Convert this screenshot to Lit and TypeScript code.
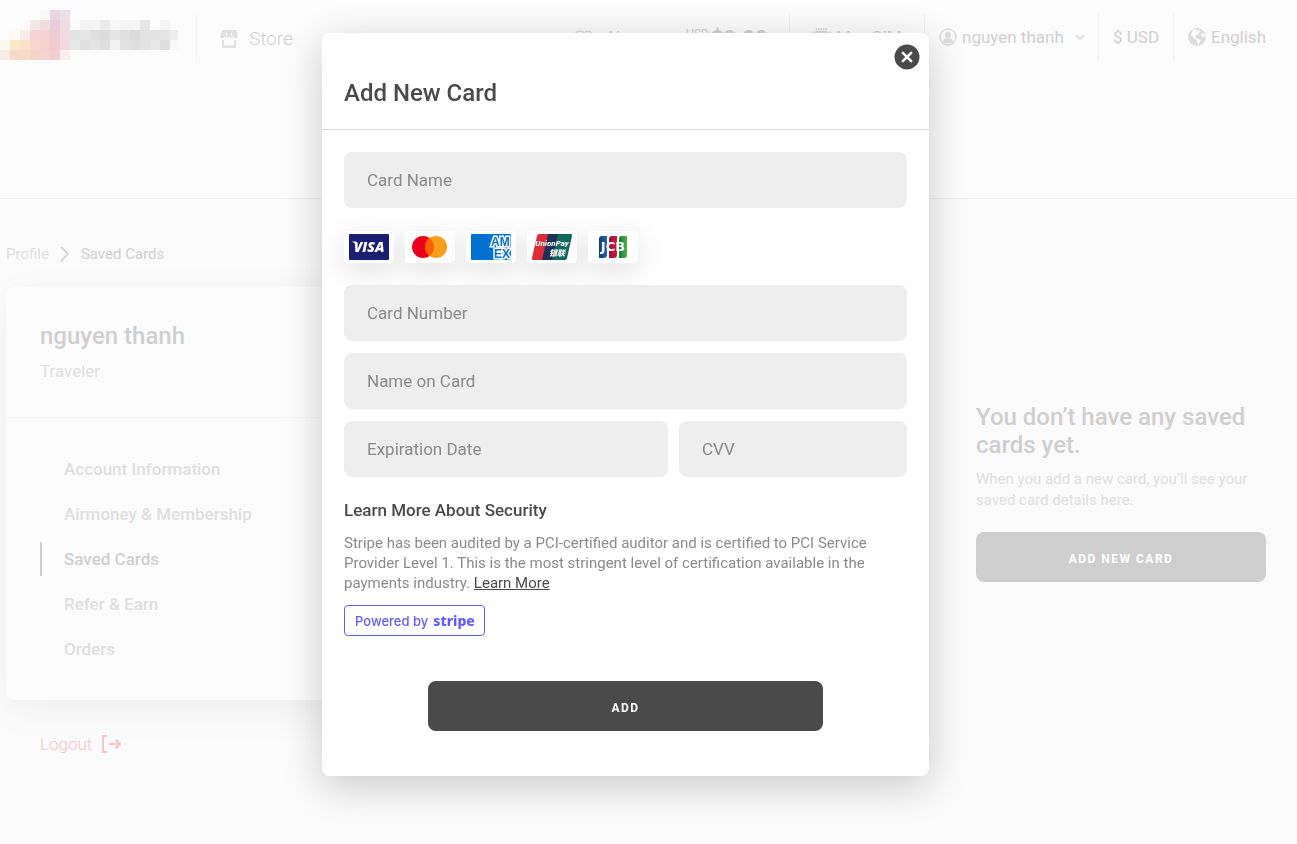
import { LitElement, html, svg, css } from "lit";
import { customElement, state } from "lit/decorators.js";

const LOGO_ROWS: string[][] = [
  ["", "", "", "", "#faf8f9", "#ead6de", "#ecdfe7"],
  ["", "", "#fcfafa", "#f6e8e8", "#f2dde1", "#e8ced8", "#f0dde4", "#fafafa", "#f4f4f4", "#f3f3f3", "#ebebeb", "#f7f7f7", "#f5f5f5", "#f5f5f5", "#e6e6e6", "#fcfcfc", "#f4f4f4"],
  ["", "#fdfaf6", "#faebe8", "#f6d4d5", "#f4d2d3", "#eeccd5", "#f0dbe3", "#e3e3e3", "#e6e6e6", "#e0e0e0", "#dcdcdc", "#e5e5e5", "#e0e0e0", "#dbdbdb", "#e3e3e3", "#e3e3e3", "#e5e5e5", "#ececec"],
  ["#fcf8f0", "#f9eac6", "#f9e2cc", "#f6d8cf", "#f5d3cd", "#f0cbd2", "#f2dbe0", "#e8e8e8", "#e0e0e0", "#e4e4e4", "#dedede", "#f0f0f0", "#e2e2e2", "#dfdfdf", "#e3e3e3", "#e7e7e7", "#dfdfdf", "#f8f8f8"],
  ["#f9ece6", "#f6dbcc", "#f6dbcc", "#f5d5c9", "#f5d3cf", "#f2ced3", "#f8efef"],
];

const MENU = ["Account Information", "Airmoney & Membership", "Saved Cards", "Refer & Earn", "Orders"];

const visa = svg`
  <rect x="5" y="3" width="40" height="26" rx="1" fill="#1a1f71"/>
  <text x="25" y="21" text-anchor="middle" font-family="Open Sans" font-size="14" font-weight="800" font-style="italic" fill="#fff">VISA</text>
  <path d="M8 10.500h4l2 4z" fill="#fff"/>`;

const mastercard = svg`
  <circle cx="18" cy="16" r="11" fill="#eb001b"/>
  <circle cx="31" cy="16" r="11" fill="#f79e1b"/>
  <path d="M24.5 7.100a11 11 0 0 1 0 17.800a11 11 0 0 1 0-17.800z" fill="#ff5f00"/>`;

const amex = svg`
  <rect x="5" y="3" width="40" height="26" rx="1" fill="#0070d1"/>
  <g font-family="Liberation Sans" font-size="12" font-weight="700" fill="#0070d1" stroke="#fff" stroke-width="3" paint-order="stroke">
    <text x="25" y="15">AM</text>
    <text x="28" y="27">EX</text>
  </g>
  <path d="M45 3h5v26h-5zM5 29h40v2H5z" fill="#fff"/>`;

const unionpay = svg`
  <path d="M12 3h11l-6 26H6.500q-2 0-1.500-2L10 5q.5-2 2-2z" fill="#dd2c38"/>
  <path d="M21 3h12l-6 26H15z" fill="#1f3158"/>
  <path d="M31 3h12.500q2 0 1.500 2l-5 22q-.5 2-2 2H25z" fill="#11695f"/>
  <text x="25" y="15" text-anchor="middle" font-size="8" font-weight="800" font-style="italic" fill="#fff">UnionPay</text>
  <text x="30" y="25" text-anchor="middle" font-size="8" font-weight="900" font-style="italic" fill="#fff">银联</text>`;

const jcb = svg`
  <defs>
    <linearGradient id="jb"><stop stop-color="#0b3f78"/><stop offset="1" stop-color="#2466b0"/></linearGradient>
    <linearGradient id="jr"><stop stop-color="#8a1a38"/><stop offset="1" stop-color="#d8163f"/></linearGradient>
    <linearGradient id="jg"><stop stop-color="#11793c"/><stop offset="1" stop-color="#55b43a"/></linearGradient>
  </defs>
  <path d="M14 5h5v19q0 3-3 3h-5V8q0-3 3-3z" fill="url(#jb)"/>
  <path d="M24 5h5v19q0 3-3 3h-5V8q0-3 3-3z" fill="url(#jr)"/>
  <path d="M34 5h5v19q0 3-3 3h-5V8q0-3 3-3z" fill="url(#jg)"/>
  <text x="25" y="20" text-anchor="middle" font-family="DejaVu Sans" font-size="13" font-weight="700" fill="#fff">JCB</text>`;

const BRANDS = [
  { name: "Visa", art: visa },
  { name: "Mastercard", art: mastercard },
  { name: "American Express", art: amex },
  { name: "UnionPay", art: unionpay },
  { name: "JCB", art: jcb },
];

@customElement("app-root")
export class AppRoot extends LitElement {
  static styles = css`
    :host {
      --ink: #4a4a4a;
      --ink-soft: #8a8a8a;
      --dim: #cfcfcf;
      --dim-soft: #dfdfdf;
      --line: #f1f1f1;
      display: block;
      min-height: 100vh;
      background: #fbfbfb;
      color: var(--dim);
      font-family: Roboto, "Noto Sans", "Noto Sans CJK SC", sans-serif;
      font-size: 17px;
      line-height: 20px;
    }
    * { box-sizing: border-box; }
    h1, h2, h3, p, ul { margin: 0; padding: 0; }
    ul { list-style: none; }
    a { color: inherit; text-decoration: none; }
    button { font: inherit; border: 0; cursor: pointer; }
    svg { display: block; flex: none; }

    .top {
      height: 199px;
      background: #fcfcfc;
      border-bottom: 1px solid #f0f0f0;
    }
    .bar {
      display: flex;
      padding: 10px 31px 0 0;
      font-weight: 300;
    }
    .store {
      display: flex;
      align-items: center;
      gap: 11px;
      height: 49px;
      margin: 4px 0 0 18px;
      padding-left: 23px;
      border-left: 1px solid var(--line);
      font-size: 19px;
    }
    .nav {
      display: grid;
      grid-template-columns: 216px 135px 174px 75px 93px;
      height: 48px;
      margin: 4px 0 0 auto;
    }
    .item {
      display: flex;
      align-items: center;
      padding: 0 0 2px 14px;
      background: none;
      color: inherit;
      font-size: 17px;
      font-weight: 400;
      white-space: nowrap;
      gap: 5px;
    }
    .item + .item { border-left: 1px solid var(--line); }
    .balance {
      gap: 2px;
      padding-left: 0;
    }
    .balance svg { margin-right: 10px; }
    .balance sup {
      margin: 0 0 6px 7px;
      font-size: 12px;
      line-height: 12px;
    }
    .balance strong {
      padding-top: 4px;
      font-size: 22px;
      font-weight: 700;
    }
    .esim { padding-left: 22px; }
    .chevron { margin-left: 6px; }

    .page {
      display: grid;
      grid-template-columns: minmax(0, 400px) 290px;
      justify-content: space-between;
      padding: 45px 31px 32px 6px;
    }
    .crumbs {
      grid-column: 1 / -1;
      display: flex;
      align-items: center;
      gap: 11px;
      margin-bottom: 23px;
      font-size: 15px;
    }
    .crumbs a { color: var(--dim-soft); }
    .panel {
      border-radius: 8px;
      background: #fcfcfc;
      box-shadow: 0 10px 40px rgba(0, 0, 0, 0.05);
    }
    .who {
      padding: 35px 34px;
      border-bottom: 1px solid #f7f7f7;
    }
    .who h2, .empty h2 {
      font-size: 24px;
      line-height: 28px;
      font-weight: 500;
    }
    .who p {
      margin-top: 10px;
      line-height: 22px;
      color: var(--dim-soft);
    }
    .menu {
      display: grid;
      gap: 11px;
      padding: 34px;
      font-weight: 500;
      color: var(--dim-soft);
    }
    .menu a {
      display: flex;
      align-items: center;
      height: 34px;
      padding-left: 22px;
      border-left: 2px solid transparent;
    }
    .menu .current {
      color: var(--dim);
      border-color: var(--dim);
    }
    .empty {
      align-self: center;
      padding-bottom: 2px;
    }
    .empty p {
      margin: 10px 0 21px;
      font-size: 15px;
      line-height: 21px;
      color: var(--dim-soft);
    }
    .wide, .submit {
      height: 50px;
      padding: 4px 0 0;
      border-radius: 8px;
      color: #fff;
      font-size: 12px;
      font-weight: 700;
      letter-spacing: 1.5px;
    }
    .wide { width: 100%; background: #cfcfcf; }
    .logout {
      display: flex;
      align-items: center;
      gap: 10px;
      justify-self: start;
      padding: 34px 34px 0;
      background: none;
      color: #fbc0c5;
      font-weight: 300;
    }

    .backdrop {
      position: fixed;
      inset: 0;
      display: flex;
      align-items: flex-start;
      justify-content: center;
      padding: 33px 46px 33px 0;
      overflow: auto;
    }
    .modal {
      position: relative;
      width: 100%;
      max-width: 607px;
      border-radius: 8px;
      background: #fff;
      color: var(--ink);
      box-shadow: 0 10px 40px rgba(0, 0, 0, 0.2);
    }
    .modal h1 {
      padding: 46px 22px 22px;
      border-bottom: 1px solid #dcdcdc;
      font-size: 24px;
      line-height: 28px;
      font-weight: 500;
    }
    .close {
      position: absolute;
      top: 11px;
      right: 9px;
      padding: 0;
      border-radius: 50%;
      background: none;
    }
    .form {
      display: grid;
      gap: 12px;
      padding: 22px 22px 45px;
    }
    .field {
      width: 100%;
      min-width: 0;
      height: 56px;
      padding: 0 23px;
      border: 0;
      border-radius: 8px;
      outline: 0;
      background: #eee;
      color: var(--ink);
      font: inherit;
    }
    .field::placeholder { color: var(--ink-soft); opacity: 1; }
    .pair {
      display: grid;
      grid-template-columns: 324fr 228fr;
      gap: 11px;
    }
    .brands {
      display: flex;
      gap: 11px;
      padding: 11px 0 10px;
    }
    .brand {
      border-radius: 4px;
      background: #fff;
      box-shadow: 0 8px 30px rgba(0, 0, 0, 0.12);
    }
    .security { padding-top: 11px; }
    .security h3 {
      margin-bottom: 13px;
      font-size: 17px;
      font-weight: 500;
    }
    .security p { font-size: 15px; color: var(--ink-soft); }
    .security p a { color: var(--ink); text-decoration: underline; }
    .stripe {
      display: inline-flex;
      align-items: center;
      gap: 5px;
      height: 31px;
      margin-top: 12px;
      padding: 0 9px 0 10px;
      border: 1px solid #635bff;
      border-radius: 4px;
      color: #635bff;
      font-family: Inter, sans-serif;
      font-size: 13px;
      font-weight: 500;
    }
    .stripe strong {
      font-family: "Noto Sans", sans-serif;
      font-size: 14px;
      font-weight: 800;
    }
    .submit {
      justify-self: center;
      width: 70%;
      margin-top: 33px;
      background: var(--ink);
    }
  `;

  @state() private open = true;

  private logo() {
    return svg`<svg width="178" height="50" viewBox="0 0 178 50" shape-rendering="crispEdges" aria-hidden="true">
      ${LOGO_ROWS.map((row, y) => row.map((fill, x) => fill ? svg`<rect x=${x * 10} y=${y * 10} width="10" height="10" fill=${fill}/>` : ""))}
    </svg>`;
  }

  private header() {
    return html`<header class="top">
      <div class="bar">
        ${this.logo()}
        <a class="store" href="#">
          <svg width="18" height="18" viewBox="0 0 18 18" fill="#e0e0e0">
            <path d="M2 0H16l2 6.500A1.500 1.500 0 0 1 16.500 8H14.500L12.500 6.500L11 8L9 6.500L7 8L5.500 6.500L3.500 8H1.500A1.500 1.500 0 0 1 0 6.500z"/>
            <path d="M6.500 2.500v3M11.500 2.500v3" stroke="#fcfcfc" stroke-width="1.200"/>
            <path d="M2 10h2V15.500h10V10h2V16.500A1.500 1.500 0 0 1 14.500 18h-11A1.500 1.500 0 0 1 2 16.500z"/>
          </svg>Store</a>
        <nav class="nav">
          <a class="item balance" href="#">
            <svg width="20" height="16" viewBox="0 0 20 16" fill="none" stroke="#d8d8d8" stroke-width="1.500"><circle cx="7" cy="8" r="6"/><path d="M12 2.500h4a2 2 0 0 1 2 2v8"/></svg>
            <span>Airmoney</span><sup>USD</sup><strong>$0.00</strong>
          </a>
          <a class="item esim" href="#">
            <svg width="19" height="19" viewBox="0 0 20 20"><g fill="none" stroke="#d8d8d8" stroke-width="2"><path d="M4 1h12M4 19h12M1 4v12M19 4v12" stroke-dasharray="1.500 1"/><rect x="4" y="4" width="12" height="12" rx="2"/></g></svg>My eSIM</a>
          <button class="item">
            <svg width="18" height="18" viewBox="0 0 18 18"><circle cx="9" cy="9" r="8" fill="none" stroke="#dcdcdc" stroke-width="1.500"/><circle cx="9" cy="7" r="3" fill="#dcdcdc"/><path d="M4 14q0-3.500 3-3.500h4q3 0 3 3.500-5 3-10 0z" fill="#dcdcdc"/></svg>
            nguyen thanh
            <svg class="chevron" width="10" height="7" viewBox="0 0 10 7"><path d="M1 1l4 4 4-4" fill="none" stroke="#cfcfcf" stroke-width="1.500"/></svg>
          </button>
          <button class="item">$ USD</button>
          <button class="item">
            <svg width="18" height="18" viewBox="0 0 18 18"><circle cx="9" cy="9" r="9" fill="#dcdcdc"/><path d="M5 2l3-1 1 2 2-1 1 2-3 3-2 1 1 2 3 1 2 1-1 2-2 3-1-4-3-3-3-3zM14 5l3 1 .5 3-3 0-1.500-2z" fill="#fcfcfc"/></svg>
            English</button>
        </nav>
      </div>
    </header>`;
  }

  private modal() {
    return html`<div class="backdrop">
      <section class="modal" role="dialog" aria-modal="true" aria-labelledby="title">
        <h1 id="title">Add New Card</h1>
        <button class="close" aria-label="Close" @click=${() => (this.open = false)}>
          <svg width="26" height="26" viewBox="0 0 26 26"><circle cx="13" cy="13" r="12.500" fill="#4a4a4a"/><path d="M8.800 8.800l8.400 8.400M17.200 8.800l-8.400 8.400" stroke="#fff" stroke-width="2.500" stroke-linecap="round"/></svg>
        </button>
        <form class="form" @submit=${(e: Event) => e.preventDefault()}>
          <input class="field" placeholder="Card Name" aria-label="Card Name" />
          <div class="brands">
            ${BRANDS.map((b) => html`<svg class="brand" role="img" aria-label=${b.name} width="50" height="32" viewBox="0 0 50 32">${b.art}</svg>`)}
          </div>
          <input class="field" placeholder="Card Number" aria-label="Card Number" inputmode="numeric" />
          <input class="field" placeholder="Name on Card" aria-label="Name on Card" />
          <div class="pair">
            <input class="field" placeholder="Expiration Date" aria-label="Expiration Date" />
            <input class="field" placeholder="CVV" aria-label="CVV" />
          </div>
          <div class="security">
            <h3>Learn More About Security</h3>
            <p>Stripe has been audited by a PCI-certified auditor and is certified to PCI Service Provider Level 1. This is the most stringent level of certification available in the payments industry. <a href="#">Learn More</a></p>
            <a class="stripe" href="#">Powered by <strong>stripe</strong></a>
          </div>
          <button class="submit" type="submit">ADD</button>
        </form>
      </section>
    </div>`;
  }

  render() {
    return html`
      ${this.header()}
      <main class="page">
        <nav class="crumbs">
          <a href="#">Profile</a>
          <svg width="10" height="16" viewBox="0 0 10 16"><path d="M1 1l7 7-7 7" fill="none" stroke="#d6d6d6" stroke-width="2"/></svg>
          <span>Saved Cards</span>
        </nav>
        <aside class="panel">
          <div class="who"><h2>nguyen thanh</h2><p>Traveler</p></div>
          <ul class="menu">
            ${MENU.map((m) => html`<li><a href="#" class=${m === "Saved Cards" ? "current" : ""}>${m}</a></li>`)}
          </ul>
        </aside>
        <section class="empty">
          <h2>You don’t have any saved cards yet.</h2>
          <p>When you add a new card, you’ll see your saved card details here.</p>
          <button class="wide" @click=${() => (this.open = true)}>ADD NEW CARD</button>
        </section>
        <button class="logout">Logout
          <svg width="20" height="18" viewBox="0 0 20 18" fill="none" stroke="#fbc0c5" stroke-width="1.800"><path d="M5 1H1v16h4M7 9h11M13.500 4.500L18 9l-4.500 4.500"/></svg>
        </button>
      </main>
      ${this.open ? this.modal() : ""}
    `;
  }
}
